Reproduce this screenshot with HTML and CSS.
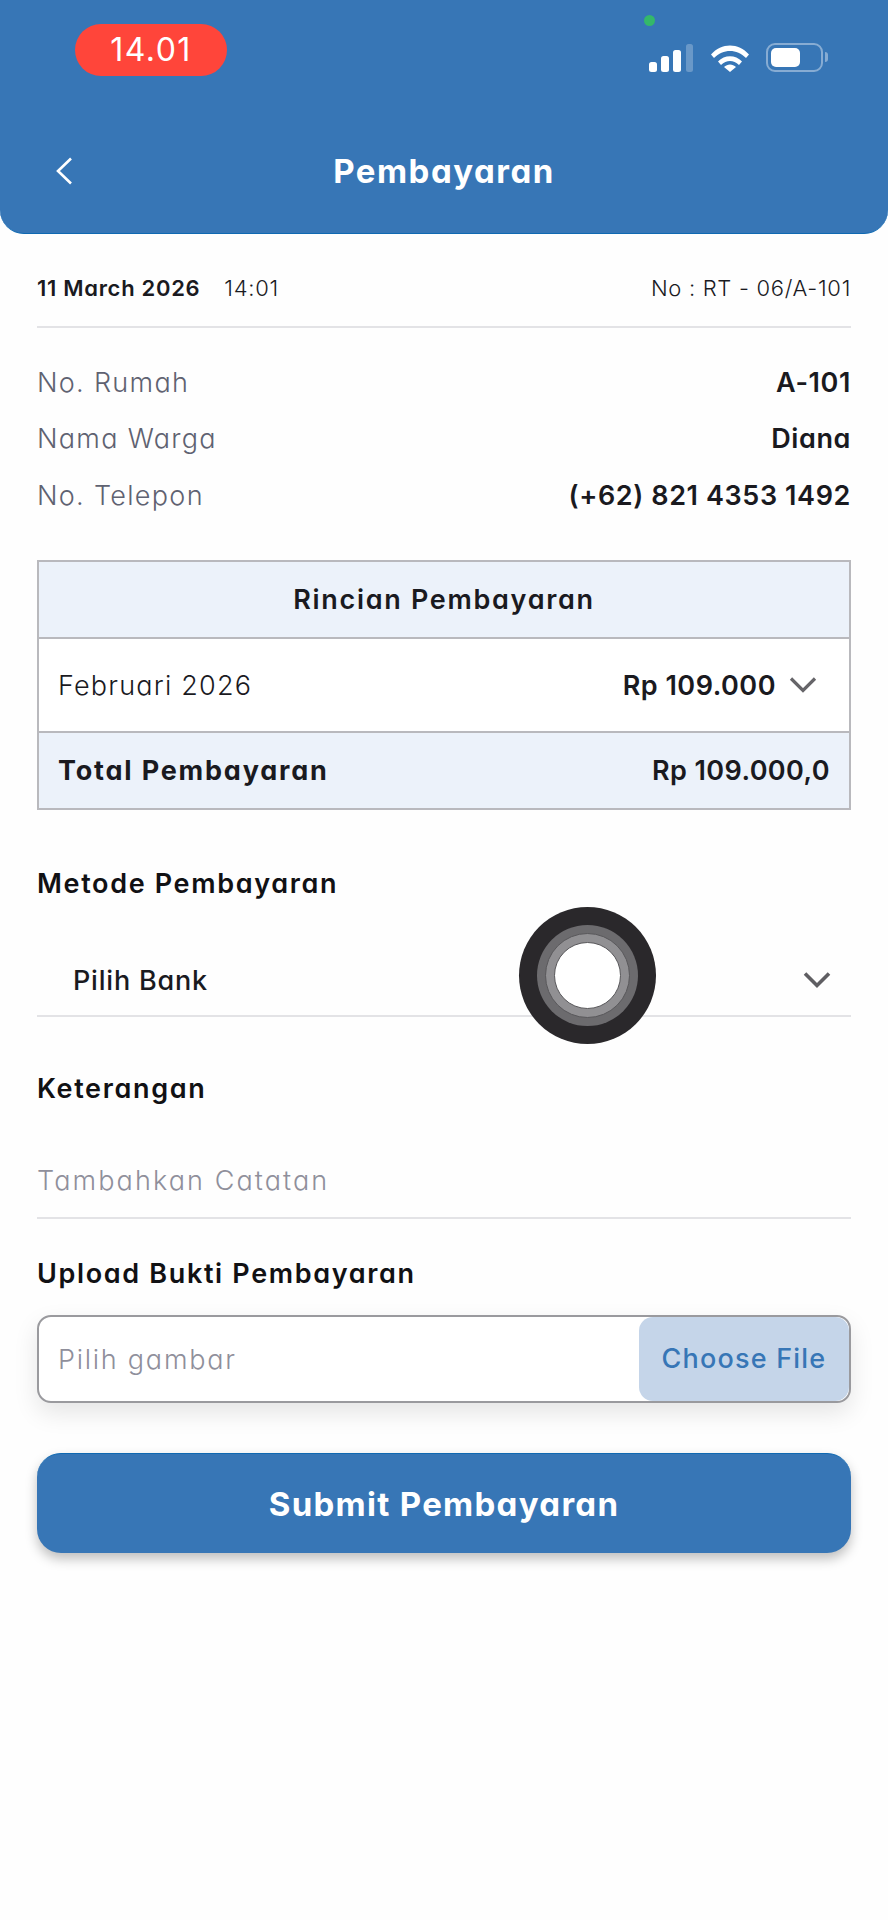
FILE: index.html
```html
<!DOCTYPE html>
<html lang="id">
<head>
    <meta charset="UTF-8">
    <meta name="viewport" content="width=device-width, initial-scale=1.0">
    <title>Pembayaran</title>
    <link rel="stylesheet" href="styles.css">
</head>
<body>
    <div class="app">
        <!-- header -->
        <header class="header">
            <div class="status-bar">
                <span class="time-pill">14.01</span>
                <div class="status-icons">
                    <svg class="signal" width="44" height="28" viewBox="0 0 44 28">
                        <rect x="0" y="18" width="8" height="10" rx="2.5" fill="#fff"/>
                        <rect x="12" y="12" width="8" height="16" rx="2.5" fill="#fff"/>
                        <rect x="24" y="6" width="8" height="22" rx="2.5" fill="#fff"/>
                        <rect x="37" y="0" width="7" height="28" rx="2.5" fill="#fff" opacity="0.25"/>
                    </svg>
                    <svg class="wifi" width="38" height="28" viewBox="0 0 38 28">
                        <path d="M0 10.500C10.500 -1.500 27.500 -1.500 38 10.500L35 14C26 4.500 12 4.500 3 14Z" fill="#fff"/>
                        <path d="M7 17.500C13.500 10.500 24.500 10.500 31 17.500L28 21C22.500 15.500 15.500 15.500 10 21Z" fill="#fff"/>
                        <path d="M13 23C16.500 19.500 21.500 19.500 25 23L19 28Z" fill="#fff"/>
                    </svg>
                    <div class="battery">
                        <div class="battery-fill"></div>
                    </div>
                </div>
                <span class="green-dot"></span>
            </div>
            <div class="nav">
                <a class="back" href="#">
                    <svg width="16" height="28" viewBox="0 0 16 28">
                        <path d="M15 1.500L2 14L15 26.500" fill="none" stroke="#fff" stroke-width="2.600"/>
                    </svg>
                </a>
                <h1 class="title">Pembayaran</h1>
            </div>
        </header>

        <main class="content">
            <div class="meta">
                <div class="meta-date"><b>11 March 2026</b><span>14:01</span></div>
                <div class="meta-no">No : RT - 06/A-101</div>
            </div>

            <div class="info">
                <div class="info-row"><span class="info-label">No. Rumah</span><span class="info-value">A-101</span></div>
                <div class="info-row"><span class="info-label">Nama Warga</span><span class="info-value">Diana</span></div>
                <div class="info-row"><span class="info-label">No. Telepon</span><span class="info-value">(+62) 821 4353 1492</span></div>
            </div>

            <div class="detail">
                <div class="detail-head">Rincian Pembayaran</div>
                <div class="detail-row">
                    <span class="detail-month">Februari 2026</span>
                    <span class="detail-amount">Rp 109.000
                        <svg width="28" height="18" viewBox="0 0 28 18">
                            <path d="M2 2.500L14 14.500L26 2.500" fill="none" stroke="#666569" stroke-width="3.200"/>
                        </svg>
                    </span>
                </div>
                <div class="detail-total">
                    <span class="total-label">Total Pembayaran</span>
                    <span class="total-value">Rp 109.000,0</span>
                </div>
            </div>

            <div class="section-label method-label">Metode Pembayaran</div>
            <div class="select-row">
                <span>Pilih Bank</span>
                <svg width="28" height="18" viewBox="0 0 28 18">
                    <path d="M2 2.500L14 14.500L26 2.500" fill="none" stroke="#5f5e62" stroke-width="3.600"/>
                </svg>
            </div>

            <div class="section-label note-label">Keterangan</div>
            <div class="note-row">Tambahkan Catatan</div>

            <div class="section-label upload-label">Upload Bukti Pembayaran</div>
            <div class="file-box">
                <span class="file-hint">Pilih gambar</span>
                <span class="file-btn">Choose File</span>
            </div>

            <button class="submit">Submit Pembayaran</button>
        </main>

        <!-- assistive touch -->
        <div class="touch"><div class="touch-ring"><div class="touch-inner"><div class="touch-dot"></div></div></div></div>
    </div>
</body>
</html>
```

FILE: styles.css
```css
* {
    box-sizing: border-box;
}
body {
    margin: 0;
    font-family: Inter, "Noto Sans", sans-serif;
    font-feature-settings: "cv11";
    background-color: #fefefe;
    color: #1a1a1f;
}
.app {
    position: relative;
    width: 888px;
    height: 1920px;
    overflow: hidden;
}

/* header */
.header {
    height: 234px;
    background-color: #3776b6;
    border-bottom: 1px solid #0f69b2;
    border-radius: 0 0 24px 24px;
    color: white;
}
.status-bar {
    position: relative;
    display: flex;
    align-items: flex-start;
    justify-content: space-between;
    padding: 24px 65px 0 75px;
    height: 130px;
}
.time-pill {
    width: 152px;
    height: 52px;
    border-radius: 26px;
    background-color: #ff453a;
    font-size: 32px;
    letter-spacing: 1.5px;
    line-height: 52px;
    text-align: center;
}
.status-icons {
    display: flex;
    align-items: center;
    gap: 17px;
    margin-top: 19px;
}
.signal, .wifi {
    display: block;
}
.signal {
    margin-right: 1px;
}
.battery {
    position: relative;
    width: 57px;
    height: 29px;
    padding: 3px;
    border: 2px solid rgba(255, 255, 255, 0.4);
    border-radius: 9px;
}
.battery::after {
    content: "";
    position: absolute;
    top: 7px;
    right: -7px;
    width: 3px;
    height: 10px;
    border-radius: 0 3px 3px 0;
    background-color: rgba(255, 255, 255, 0.4);
}
.battery-fill {
    width: 29px;
    height: 100%;
    background-color: white;
    border-radius: 5px;
}
.green-dot {
    position: absolute;
    top: 15px;
    left: 644px;
    width: 11px;
    height: 11px;
    border-radius: 50%;
    background-color: #34b86a;
}
.nav {
    position: relative;
    display: flex;
    align-items: center;
    justify-content: center;
    height: 82px;
}
.back {
    position: absolute;
    left: 56px;
    top: 27px;
    line-height: 0;
}
.title {
    margin: 0;
    font-size: 33px;
    font-weight: 700;
    letter-spacing: 1.5px;
}

/* content */
.content {
    padding: 0 37px;
}
.meta {
    display: flex;
    align-items: center;
    justify-content: space-between;
    height: 94px;
    border-bottom: 2px solid #e3e3e6;
    padding-top: 16px;
    font-size: 22px;
    font-weight: 300;
    letter-spacing: 0.7px;
}
.meta-date b {
    font-weight: 600;
    margin-right: 24px;
}
.info {
    padding-top: 26px;
}
.info-row {
    display: flex;
    justify-content: space-between;
    align-items: center;
    height: 56.500px;
    font-size: 27px;
}
.info-label {
    color: #5f6271;
    font-weight: 350;
    letter-spacing: 1.3px;
}
.info-value {
    font-weight: 600;
    letter-spacing: 0.6px;
}

.detail {
    margin-top: 36.500px;
    border: 2px solid #b9b9bd;
}
.detail-head {
    height: 77px;
    background-color: #ecf2fa;
    border-bottom: 2px solid #b9b9bd;
    font-size: 27px;
    font-weight: 600;
    letter-spacing: 1.7px;
    line-height: 75px;
    text-align: center;
}
.detail-row, .detail-total {
    display: flex;
    align-items: center;
    justify-content: space-between;
    padding: 0 19px;
    font-size: 27px;
}
.detail-row {
    height: 94px;
    background-color: white;
    border-bottom: 2px solid #b9b9bd;
}
.detail-month {
    font-weight: 300;
    letter-spacing: 1.2px;
}
.detail-amount {
    display: flex;
    align-items: center;
    gap: 13px;
    padding-right: 13px;
    font-weight: 600;
    letter-spacing: 0.5px;
}
.detail-total {
    height: 75px;
    background-color: #ecf2fa;
}
.total-label {
    font-weight: 700;
    letter-spacing: 1.8px;
}
.total-value {
    font-weight: 600;
    letter-spacing: 0.4px;
}

.section-label {
    font-size: 27px;
    font-weight: 600;
    letter-spacing: 1.65px;
    line-height: 36px;
    color: #111114;
}
.method-label {
    margin-top: 56px;
}
.select-row {
    display: flex;
    align-items: center;
    justify-content: space-between;
    height: 99px;
    margin-top: 16px;
    padding: 27px 20px 0 36px;
    border-bottom: 2px solid #e3e3e6;
    font-size: 27px;
    font-weight: 500;
    letter-spacing: 0.8px;
}
.note-label {
    margin-top: 54px;
}
.note-row {
    height: 97px;
    margin-top: 15px;
    padding-top: 42px;
    border-bottom: 2px solid #e3e3e6;
    font-size: 27px;
    font-weight: 300;
    letter-spacing: 2.1px;
    color: #8f8f9b;
}
.upload-label {
    margin-top: 37px;
}
.file-box {
    display: flex;
    align-items: stretch;
    justify-content: space-between;
    height: 88px;
    margin-top: 23px;
    border: 2px solid #9a9a9e;
    border-radius: 14px;
    background-color: white;
    box-shadow: 0 10px 24px rgba(0, 0, 0, 0.1);
}
.file-hint {
    align-self: center;
    padding-left: 19px;
    font-size: 27px;
    font-weight: 300;
    letter-spacing: 1.75px;
    color: #8f8f9b;
}
.file-btn {
    width: 210px;
    border-radius: 14px;
    background-color: #c5d5e9;
    color: #3776b6;
    font-size: 27px;
    font-weight: 500;
    letter-spacing: 1.2px;
    line-height: 84px;
    text-align: center;
}
.submit {
    display: block;
    width: 100%;
    height: 100px;
    margin-top: 50px;
    border: none;
    border-top: 1px solid #0f69b2;
    border-radius: 24px;
    background-color: #3776b6;
    box-shadow: 0 6px 12px rgba(0, 0, 0, 0.25);
    color: white;
    font-family: inherit;
    font-feature-settings: inherit;
    font-size: 33px;
    font-weight: 700;
    letter-spacing: 1.3px;
}

/* assistive touch */
.touch {
    position: absolute;
    left: 519px;
    top: 907px;
    width: 137px;
    height: 137px;
    display: flex;
    align-items: center;
    justify-content: center;
    border-radius: 50%;
    background-color: #2a282b;
}
.touch-ring {
    width: 101px;
    height: 101px;
    display: flex;
    align-items: center;
    justify-content: center;
    border-radius: 50%;
    background-color: #6c6b6e;
}
.touch-inner {
    width: 85px;
    height: 85px;
    display: flex;
    align-items: center;
    justify-content: center;
    border-radius: 50%;
    border: 1px solid #59585b;
    background-color: #919093;
}
.touch-dot {
    width: 67px;
    height: 67px;
    border-radius: 50%;
    border: 1px solid #59585b;
    background-color: white;
}
```
